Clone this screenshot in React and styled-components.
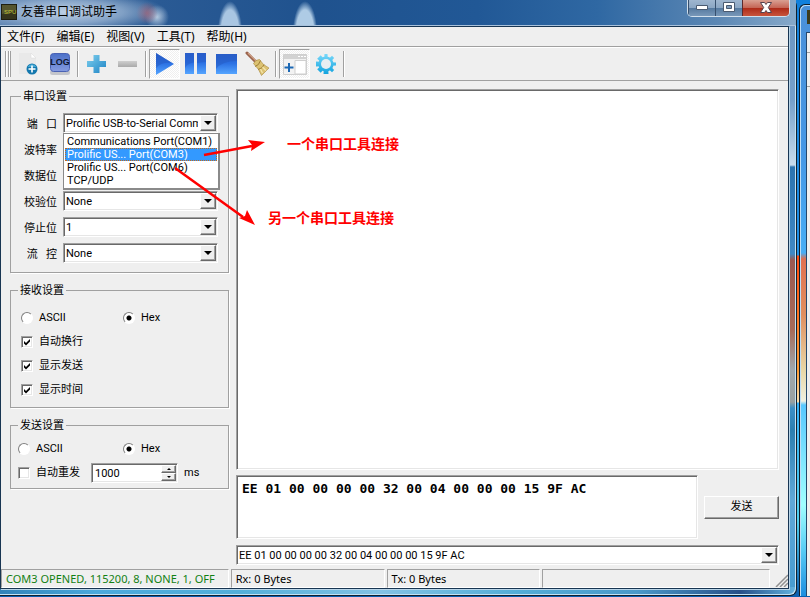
import React from "react";
import styled, { createGlobalStyle, css } from "styled-components";

const UI = 'Roboto, "Noto Sans CJK SC", sans-serif';
const MENU = '"Noto Sans", "Noto Sans CJK SC", sans-serif';
const FACE = "#efefef";

const GlobalStyle = createGlobalStyle`
  * { box-sizing: border-box; }
  body { margin: 0; background: #1f7fc9; color: #000; font: 11px/14px ${UI}; overflow: hidden; }
  button, input, select, textarea { font: inherit; color: inherit; margin: 0; border-radius: 0; }
`;

const sunken = css`
  border: 1px solid;
  border-color: #a0a0a0 #fff #fff #a0a0a0;
  box-shadow: inset 1px 1px 0 #696969, inset -1px -1px 0 #e6e6e6;
`;

const raised = css`
  background: ${FACE};
  border: 1px solid;
  border-color: #fff #696969 #696969 #fff;
  box-shadow: inset -1px -1px 0 #a0a0a0;
`;

const Desktop = styled.div`
  display: flex;
  min-height: 100vh;
  padding-bottom: 1px;
  background: linear-gradient(#1180dc 0, #1e90e8 255px, #ff4a10 256px, #ff9a30 370px, #f8e0b0 402px, #30b0f8 403px, #50d0f0 520px, #0a5fb0 596px);
`;

const Window = styled.div`
  flex: 1;
  display: flex;
  flex-direction: column;
  min-width: 0;
  padding: 0 6px 6px 0;
  border: solid #10202e;
  border-width: 0 1px 1px 0;
  border-radius: 0 6px 7px 0;
  box-shadow: inset -1px -1px 0 #c3e2f4;
  background:
    linear-gradient(90deg, #3182b8, #4ba9dc 12%, #53afd9 30%, #82c2e4 48%, #53add7 65%, #4a99c9 80%, #284f88 93%, #62b4e0) bottom / 100% 8px no-repeat,
    linear-gradient(#6b94c0 0, #75a0cb 100px, #c8dcec 165px, #2b74b0 167px, #3f88c4 254px, #9c5850 260px, #a86a58 330px, #a0a8ac 370px, #98a0a0 402px, #3b8fc6 408px, #2b7fb0 430px, #60a8d8 500px, #459bd0 100%);
`;

const TitleBar = styled.header`
  display: flex;
  align-items: flex-start;
  height: 26px;
  margin-right: -6px;
  border-bottom: 1px solid #a9c2dc;
  background:
    radial-gradient(ellipse 100px 20px at 68px 12px, rgba(222, 233, 246, 0.8), rgba(190, 210, 232, 0.55) 55%, transparent),
    radial-gradient(circle at 147px 13px, rgba(150, 60, 80, 0.75), transparent 11px),
    radial-gradient(circle at 157px 17px, rgba(210, 225, 240, 0.8), transparent 12px),
    radial-gradient(ellipse 15px 40px at 230px 34px, #a9c6e2 60%, transparent 82%),
    radial-gradient(ellipse 15px 40px at 305px 34px, #aecbe5 60%, transparent 82%),
    linear-gradient(90deg, #587fae, #2a5a94 20%, #1f528e 40%, #215896 60%, #2f68a3 75%, #5b87b4 90%, #86a9ca);
`;

const AppIcon = styled.svg`
  width: 16px;
  height: 16px;
  margin: 4px 4px 0 1px;
`;

const Title = styled.h1`
  flex: 1;
  margin: 3px 0 0;
  font: 12px/18px ${MENU};
`;

const WindowButtons = styled.div`
  display: flex;
  margin-right: 6px;
  border: 1px solid #d2e0ec;
  border-top: 0;
  border-radius: 0 0 5px 5px;
  overflow: hidden;
`;

const WindowButton = styled.button`
  display: grid;
  place-items: center;
  width: ${(p) => (p.$close ? 47 : 27)}px;
  height: 16px;
  padding: 0 0 2px;
  border: 0;
  border-left: 1px solid ${(p) => (p.$close ? "#5c2a2c" : "#37506e")};
  background: ${(p) =>
    p.$close
      ? "linear-gradient(#d9a092, #c46353 50%, #ad2a18 51%, #c8543c)"
      : "linear-gradient(#9fb6cf, #8ba6c3 50%, #55799f 51%, #7898b9)"};
`;

const Client = styled.div`
  position: relative;
  flex: 1;
  display: flex;
  flex-direction: column;
  border: 1px solid #183552;
  box-shadow: 1px 1px 0 #b9d5e8;
  background: ${FACE};
  margin-right: 1px;
`;

const MenuBar = styled.nav`
  display: flex;
  gap: 12px;
  height: 20px;
  padding: 0 6px;
  border-bottom: 1px solid #a0a0a0;
`;

const MenuItem = styled.button`
  padding: 0;
  border: 0;
  background: none;
  font: 12px/20px ${MENU};
`;

const ToolBar = styled.div`
  display: flex;
  align-items: center;
  height: 34px;
  padding-left: 4px;
  border-top: 1px solid #fff;
  border-bottom: 1px solid #a0a0a0;
`;

const Grip = styled.span`
  width: 6px;
  height: 26px;
  margin-right: 2px;
  border: solid #a0a0a0;
  border-width: 0 1px;
  background: linear-gradient(90deg, #fff 1px, transparent 1px 2px, #a0a0a0 2px 3px, #fff 3px);
`;

const ToolButton = styled.button`
  display: grid;
  place-items: center;
  width: 31px;
  height: 30px;
  padding: 0;
  border: 1px solid transparent;
  background: none;
  ${(p) =>
    p.$pressed &&
    css`
      border-color: #a0a0a0 #fff #fff #a0a0a0;
      background: repeating-conic-gradient(#fff 0 25%, #efefef 0 50%) 0 0 / 2px 2px;
    `}
`;

const Separator = styled.span`
  width: 2px;
  height: 26px;
  margin: 0 2px;
  background: linear-gradient(90deg, #a0a0a0 1px, #fff 1px);
`;

const Body = styled.main`
  flex: 1;
  display: grid;
  grid-template-columns: 219px 1fr;
  gap: 7px;
  padding: 8px 9px 4px;
`;

const Settings = styled.aside`
  display: flex;
  flex-direction: column;
  gap: 10px;
`;

const groupPadding = {
  port: "10px 10px 9px",
  receive: "9px 7px 5px",
  send: "5px 7px 3px",
};

const Group = styled.fieldset`
  display: flex;
  flex-direction: column;
  gap: ${(p) => (p.$kind === "port" ? 6 : 0)}px;
  min-width: 0;
  margin: 0;
  padding: ${(p) => groupPadding[p.$kind]};
  border: 1px solid #a0a0a0;
  box-shadow: 1px 1px 0 #fff;
`;

const Legend = styled.legend`
  height: 14px;
  padding: 0 2px;
  line-height: 16px;
`;

const Field = styled.div`
  position: relative;
  display: grid;
  grid-template-columns: 36px minmax(0, 1fr);
  gap: 6px;
  align-items: center;
  height: 20px;
`;

const FieldLabel = styled.label`
  padding-top: 4px;
  text-align: right;
  white-space: pre;
`;

const Combo = styled.div`
  ${sunken}
  position: relative;
  display: flex;
  min-width: 0;
  height: 20px;
  padding: 1px;
  background: #fff;
`;

const Select = styled.select`
  appearance: none;
  flex: 1;
  min-width: 0;
  margin-right: 18px;
  padding: 1px 0 0 1px;
  border: 0;
  outline: 0;
  background: none;
  line-height: 15px;
  text-overflow: clip;
  overflow: hidden;
`;

const ArrowBox = styled.span`
  ${raised}
  position: absolute;
  top: 1px;
  right: 1px;
  display: grid;
  place-items: center;
  width: 16px;
  height: 16px;
  pointer-events: none;
`;

const PortList = styled.ul`
  position: absolute;
  z-index: 2;
  top: 20px;
  left: 42px;
  right: -2px;
  margin: 0;
  padding: 1px;
  list-style: none;
  background: #fff;
  border: solid #8a8a8a;
  border-width: 1px 2px 2px 1px;
`;

const PortItem = styled.li`
  height: 13px;
  padding-left: 2px;
  line-height: 13px;
  white-space: nowrap;
  ${(p) =>
    p.$active &&
    css`
      color: #fff;
      background: #3399ff;
      outline: 1px dotted #c46a1a;
      outline-offset: -1px;
    `}
`;

const OptionRow = styled.div`
  display: grid;
  grid-template-columns: ${(p) => (p.$inset ? 102 : 105)}px 1fr;
  height: 24px;
  padding-left: ${(p) => (p.$inset ? 3 : 0)}px;
`;

const Choice = styled.label`
  display: flex;
  align-items: center;
  gap: 6px;
`;

const Radio = styled.input`
  appearance: none;
  width: 12px;
  height: 12px;
  border: 1px solid;
  border-color: #808080 #fff #fff #808080;
  border-radius: 50%;
  background: #fff;
  &:checked {
    background: radial-gradient(circle, #000 2px, #fff 3px);
  }
`;

const Check = styled.input`
  ${sunken}
  appearance: none;
  width: 12px;
  height: 12px;
  background: #fff;
`;

const CheckBox = styled.span`
  position: relative;
  display: flex;
`;

const CheckMark = styled.svg`
  position: absolute;
  inset: 0;
  pointer-events: none;
`;

const RepeatRow = styled.div`
  display: flex;
  align-items: center;
  height: 24px;
`;

const Spin = styled.div`
  ${sunken}
  display: flex;
  width: 87px;
  height: 20px;
  margin: 0 6px 0 11px;
  padding: 1px;
  background: #fff;
`;

const SpinInput = styled.input`
  flex: 1;
  min-width: 0;
  padding: 1px 2px 0;
  border: 0;
  outline: 0;
  background: none;
`;

const SpinButtons = styled.div`
  display: grid;
  grid-template-rows: 1fr 1fr;
  width: 15px;
`;

const SpinButton = styled.button`
  ${raised}
  display: grid;
  place-items: center;
  padding: 0;
`;

const Work = styled.section`
  display: flex;
  flex-direction: column;
  min-width: 0;
`;

const Output = styled.textarea`
  ${sunken}
  display: block;
  flex: 1;
  width: 100%;
  margin-bottom: 5px;
  resize: none;
  outline: 0;
  background: #fff;
`;

const SendRow = styled.div`
  display: flex;
  gap: 6px;
  align-items: center;
  margin-bottom: 6px;
`;

const SendBox = styled.textarea`
  ${sunken}
  display: block;
  flex: 1;
  height: 64px;
  padding: 5px;
  resize: none;
  outline: 0;
  background: #fff;
  font: bold 13px/16px "DejaVu Sans Mono", monospace;
`;

const SendButton = styled.button`
  ${raised}
  width: 75px;
  height: 23px;
  padding: 0;
`;

const StatusBar = styled.footer`
  display: grid;
  grid-template-columns: minmax(0, 228fr) 154fr 154fr 228fr 16px;
  gap: 2px;
  height: 19px;
  padding-bottom: 1px;
  font-family: ${MENU};
`;

const StatusPanel = styled.span`
  padding: 0 4px;
  border: 1px solid;
  border-color: #a0a0a0 #fff #fff #a0a0a0;
  white-space: nowrap;
  color: ${(p) => (p.$ok ? "#128012" : "#000")};
  line-height: 17px;
`;

const Annotations = styled.svg`
  position: absolute;
  z-index: 3;
  top: 0;
  left: 0;
  pointer-events: none;
`;

const Note = styled.span`
  position: absolute;
  z-index: 3;
  top: ${(p) => p.$y}px;
  left: ${(p) => p.$x}px;
  color: #f00;
  font: bold 14px/20px "Noto Sans CJK SC", sans-serif;
  white-space: nowrap;
`;

const Neighbour = styled.div`
  display: flex;
  flex-direction: column;
  width: 11px;
  margin: 4px 0 0 2px;
  border-left: 1px solid #10202e;
  border-top: 1px solid #10202e;
  border-radius: 6px 0 0 0;
  box-shadow: inset 1px 1px 0 #bcdcf5;
  background: linear-gradient(#4a90d8 0, #4598e6 150px, #48aef5 248px, #e07050 254px, #e09060 310px, #e8d8a8 366px, #f0f0e0 396px, #58c8ff 400px, #a0ffff 500px, #58cdf5 545px, #1c8ee0 100%);
`;

const NeighbourIcon = styled.span`
  width: 3px;
  height: 14px;
  margin: 5px 0 8px auto;
  background: #3d3c1c;
`;

const NeighbourClient = styled.div`
  flex: 1;
  margin-left: 6px;
  border-left: 1px solid #24486c;
  border-top: 1px solid #24486c;
  background: linear-gradient(${FACE} 19px, #a0a0a0 19px 20px, ${FACE} 20px 53px, #a0a0a0 53px 54px, ${FACE} 54px);
`;

const Down = () => (
  <svg width="8" height="4" aria-hidden="true"><path d="M0 0h8L4 4z" fill="#000" /></svg>
);

function ComboBox({ id, value }) {
  return (
    <Combo>
      <Select id={id} defaultValue={value} aria-label={id === "history" ? "history" : undefined}>
        <option>{value}</option>
      </Select>
      <ArrowBox><Down /></ArrowBox>
    </Combo>
  );
}

function Tick({ label, checked }) {
  return (
    <Choice>
      <CheckBox>
        <Check type="checkbox" defaultChecked={checked} />
        {checked && (
          <CheckMark width="12" height="12" viewBox="0 0 12 12" aria-hidden="true">
            <path d="M3 5l2 2 4-4v2.500L5 9.500 3 7.500z" fill="#000" />
          </CheckMark>
        )}
      </CheckBox>
      {label}
    </Choice>
  );
}

const NewIcon = () => (
  <svg width="24" height="24" viewBox="0 0 24 24">
    <path d="M2 1h12l5 5v16H2z" fill="#e9e9e9" />
    <path d="M14 1v5h5z" fill="#fff" stroke="#dedede" strokeWidth=".6" />
    <circle cx="15" cy="17" r="5.500" fill="#1478ae" />
    <path d="M10.500 15a5 5 0 0 1 9 0z" fill="#46a9d4" />
    <path d="M15 13.500v7M11.500 17h7" stroke="#fff" strokeWidth="1.600" />
  </svg>
);
const LogIcon = () => (
  <svg width="24" height="24" viewBox="0 0 24 24">
    <defs><linearGradient id="lg" x2="0" y2="1"><stop stopColor="#4b70c8" /><stop offset="1" stopColor="#859be0" /></linearGradient></defs>
    <rect x="2" y="18" width="20" height="5" rx="2.500" fill="#c3c5cb" />
    <rect x="2.500" y="1.500" width="19" height="18" rx="3" fill="url(#lg)" stroke="#4a62b4" />
    <text x="12" y="13" textAnchor="middle" fontFamily="Liberation Sans" fontWeight="bold" fontSize="9" fill="#101830">LOG</text>
  </svg>
);
const PlusIcon = () => (
  <svg width="20" height="20" viewBox="0 0 20 20">
    <defs><linearGradient id="pg" x2="1" y2="1"><stop stopColor="#7fd0ee" /><stop offset="1" stopColor="#1d83c5" /></linearGradient></defs>
    <path d="M6.500 1h6v6H19v6h-6.500v6h-6v-6H0V7h6.500z" fill="url(#pg)" />
  </svg>
);
const MinusIcon = () => (
  <svg width="20" height="20" viewBox="0 0 20 20">
    <defs><linearGradient id="mg" x2="0" y2="1"><stop stopColor="#cfcfcf" /><stop offset="1" stopColor="#aaa" /></linearGradient></defs>
    <path d="M0 7h19v6H0z" fill="url(#mg)" />
  </svg>
);
const Blue = ({ id }) => (
  <defs><linearGradient id={id} x2="0" y2="1"><stop stopColor="#2c62cf" /><stop offset=".45" stopColor="#2a6fe2" /><stop offset="1" stopColor="#55a5ff" /></linearGradient></defs>
);
const PlayIcon = () => (
  <svg width="24" height="24" viewBox="0 0 24 24">
    <Blue id="b1" />
    <path d="M3 1l18 11L3 23z" fill="url(#b1)" />
    <path d="M3 16Q8 10 19 11L3 1z" fill="#2456bd" opacity=".45" />
  </svg>
);
const PauseIcon = () => (
  <svg width="24" height="24" viewBox="0 0 24 24">
    <Blue id="b2" />
    <path d="M1 1h9v21H1zM13 1h9v21h-9z" fill="url(#b2)" />
    <path d="M1 16q3-5 9-5.500V1H1zM13 11q5-1 9-1V1h-9z" fill="#2456bd" opacity=".4" />
  </svg>
);
const StopIcon = () => (
  <svg width="24" height="24" viewBox="0 0 24 24">
    <Blue id="b3" />
    <path d="M1 2h21v20H1z" fill="url(#b3)" />
    <path d="M1 17q6-8 21-8V2H1z" fill="#2456bd" opacity=".45" />
  </svg>
);
const BroomIcon = () => (
  <svg width="26" height="26" viewBox="0 0 26 26">
    <path d="M2 2l10 10" stroke="#9a634c" strokeWidth="3" strokeLinecap="round" />
    <path d="M3 2l9 9" stroke="#cfa085" strokeWidth="1.200" />
    <path d="M8.500 12.500q2-4 6-4l4 5 5.500 3.500-7.500 7.500-3-6z" fill="#dcc272" stroke="#a98a3e" strokeWidth=".6" />
    <path d="M10 15.500q4-1 5.500-6M13 18.500q5-1 6-5" stroke="#a07f35" strokeWidth="1" fill="none" />
    <path d="M15.500 18l2 4M17.500 16l3.500 3.500" stroke="#f5e7ae" strokeWidth="1.200" />
  </svg>
);
const PanelIcon = () => (
  <svg width="24" height="24" viewBox="0 0 24 24">
    <path d="M.5 2.500h23v20H.5z" fill="#f2f2f2" stroke="#cfcfcf" />
    <path d="M1 3h22v4H1z" fill="#d2d2d2" />
    <path d="M15 4.500h2m1 0h2m1 0h2" stroke="#fff" />
    <path d="M12 8.500h11V22H12z" fill="#fff" stroke="#cfcfcf" />
    <path d="M6 11v9M1.500 15.500h9" stroke="#1c68b4" strokeWidth="2" />
  </svg>
);
const GearIcon = () => (
  <svg width="22" height="22" viewBox="0 0 22 22">
    <defs>
      <linearGradient id="gg" gradientUnits="userSpaceOnUse" x1="0" y1="1" x2="0" y2="21"><stop stopColor="#78d8fa" /><stop offset="1" stopColor="#12a3de" /></linearGradient>
      <mask id="teeth">
        {[0, 45, 90, 135].map((a) => (
          <path key={a} d="M9.500 1h3l1 20h-5z" fill="#fff" transform={`rotate(${a} 11 11)`} />
        ))}
        <circle cx="11" cy="11" r="7.600" fill="#fff" />
      </mask>
    </defs>
    <path d="M0 0h22v22H0z" fill="url(#gg)" mask="url(#teeth)" />
    <circle cx="11" cy="11" r="5" fill="#e9eef2" />
  </svg>
);

const menus = ["文件(F)", "编辑(E)", "视图(V)", "工具(T)", "帮助(H)"];
const tools = [
  ["新建", NewIcon], ["日志", LogIcon], null,
  ["增加", PlusIcon], ["减少", MinusIcon], null,
  ["开始", PlayIcon, true], ["暂停", PauseIcon], ["停止", StopIcon], ["清除", BroomIcon], null,
  ["面板", PanelIcon, true], ["设置", GearIcon], null,
];
const fields = [
  ["port", "端   口", "Prolific USB-to-Serial Comm Port(COM3)"],
  ["baud", "波特率", ""],
  ["data", "数据位", ""],
  ["parity", "校验位", "None"],
  ["stop", "停止位", "1"],
  ["flow", "流   控", "None"],
];
const ports = ["Communications Port(COM1)", "Prolific US... Port(COM3)", "Prolific US... Port(COM6)", "TCP/UDP"];
const DATA = "EE 01 00 00 00 00 32 00 04 00 00 00 15 9F AC";

export default function App() {
  return (
    <>
      <GlobalStyle />
      <Desktop>
        <Window>
          <TitleBar>
            <AppIcon viewBox="0 0 16 16" aria-hidden="true">
              <rect x=".5" y=".5" width="15" height="15" fill="#35351c" stroke="#1e1e10" />
              <path d="M1 1h14v5L1 10z" fill="#55552e" />
              <text x="3" y="10" fontFamily="Liberation Sans" fontSize="6" fill="#c4c83a">SPU</text>
            </AppIcon>
            <Title>友善串口调试助手</Title>
            <WindowButtons>
              <WindowButton aria-label="最小化">
                <svg width="12" height="6"><path d="M.5 1.500h11v4H.5z" fill="#fff" stroke="#4a5a70" /></svg>
              </WindowButton>
              <WindowButton aria-label="最大化">
                <svg width="12" height="10"><path d="M.5.5h11v9H.5z" fill="#fff" stroke="#4a5a70" /><path d="M3.500 3.500h5v3h-5z" fill="#7e9cbc" stroke="#4a5a70" /></svg>
              </WindowButton>
              <WindowButton $close aria-label="关闭">
                <svg width="12" height="11" viewBox="0 0 12 11"><path d="M.5.5h4L6 2.500 7.500.5h4L8.300 5.500l3.200 5h-4L6 8.500l-1.500 2h-4l3.200-5z" fill="#fff" stroke="#55424e" /></svg>
              </WindowButton>
            </WindowButtons>
          </TitleBar>
          <Client>
            <MenuBar>{menus.map((m) => <MenuItem key={m}>{m}</MenuItem>)}</MenuBar>
            <ToolBar>
              <Grip />
              {tools.map((t, i) => {
                if (!t) return <Separator key={i} />;
                const [name, Icon, pressed] = t;
                return <ToolButton key={i} aria-label={name} $pressed={pressed}><Icon /></ToolButton>;
              })}
            </ToolBar>
            <Body>
              <Settings>
                <Group $kind="port">
                  <Legend>串口设置</Legend>
                  {fields.map(([id, label, value]) => (
                    <Field key={id}>
                      <FieldLabel htmlFor={id}>{label}</FieldLabel>
                      <ComboBox id={id} value={value} />
                      {id === "port" && (
                        <PortList role="listbox">
                          {ports.map((p, i) => (
                            <PortItem key={p} role="option" aria-selected={i === 1} $active={i === 1}>{p}</PortItem>
                          ))}
                        </PortList>
                      )}
                    </Field>
                  ))}
                </Group>
                <Group $kind="receive">
                  <Legend>接收设置</Legend>
                  <OptionRow $inset>
                    <Choice><Radio type="radio" name="rx" />ASCII</Choice>
                    <Choice><Radio type="radio" name="rx" defaultChecked />Hex</Choice>
                  </OptionRow>
                  {["自动换行", "显示发送", "显示时间"].map((t) => (
                    <OptionRow key={t} $inset><Tick label={t} checked /></OptionRow>
                  ))}
                </Group>
                <Group $kind="send">
                  <Legend>发送设置</Legend>
                  <OptionRow>
                    <Choice><Radio type="radio" name="tx" />ASCII</Choice>
                    <Choice><Radio type="radio" name="tx" defaultChecked />Hex</Choice>
                  </OptionRow>
                  <RepeatRow>
                    <Tick label="自动重发" />
                    <Spin>
                      <SpinInput aria-label="间隔" defaultValue="1000" />
                      <SpinButtons>
                        <SpinButton aria-label="增"><svg width="4" height="2"><path d="M0 2h4L2 0z" /></svg></SpinButton>
                        <SpinButton aria-label="减"><svg width="4" height="2"><path d="M0 0h4L2 2z" /></svg></SpinButton>
                      </SpinButtons>
                    </Spin>
                    ms
                  </RepeatRow>
                </Group>
              </Settings>
              <Work>
                <Output aria-label="接收" readOnly />
                <SendRow>
                  <SendBox aria-label="发送内容" defaultValue={DATA} />
                  <SendButton>发送</SendButton>
                </SendRow>
                <ComboBox id="history" value={DATA} />
              </Work>
            </Body>
            <StatusBar>
              <StatusPanel $ok>COM3 OPENED, 115200, 8, NONE, 1, OFF</StatusPanel>
              <StatusPanel>Rx: 0 Bytes</StatusPanel>
              <StatusPanel>Tx: 0 Bytes</StatusPanel>
              <StatusPanel />
              <svg width="16" height="18" aria-hidden="true">
                <path d="M4 18L16 6M8 18l8-8M12 18l4-4" stroke="#909090" strokeWidth="1.500" />
              </svg>
            </StatusBar>
            <Annotations width="280" height="210" viewBox="1 27 280 210" aria-hidden="true">
              <path d="M204 155L252 146M175 168L243 217" stroke="#f00" strokeWidth="2.500" />
              <path d="M265 142l-17-2 4 5-1 6zM255 225l-8-15-2 6-6 2z" fill="#f00" />
            </Annotations>
            <Note $x={286} $y={106}>一个串口工具连接</Note>
            <Note $x={267} $y={180}>另一个串口工具连接</Note>
          </Client>
        </Window>
        <Neighbour>
          <NeighbourIcon />
          <NeighbourClient />
        </Neighbour>
      </Desktop>
    </>
  );
}
